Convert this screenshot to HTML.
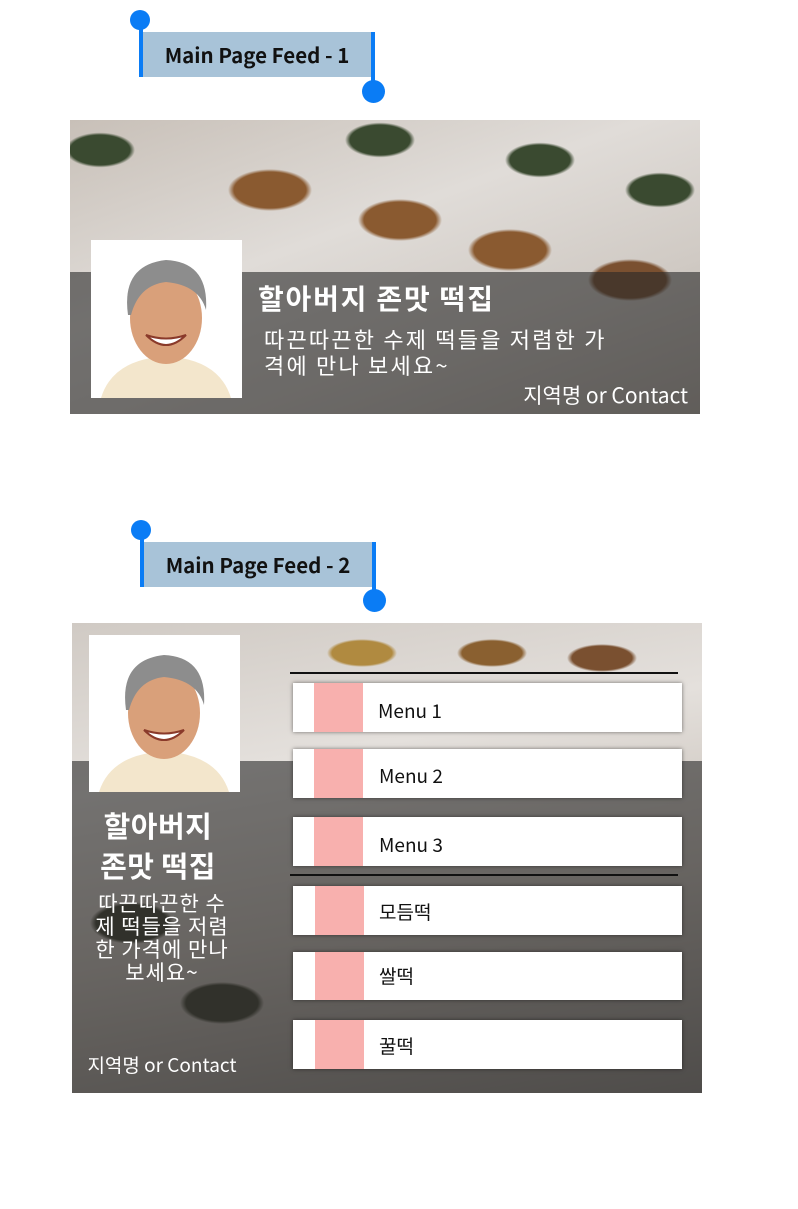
<!DOCTYPE html>
<html><head><meta charset="utf-8"><style>
body{margin:0;width:798px;height:1209px;background:#fff;position:relative;overflow:hidden;font-family:"Noto Sans CJK KR","Liberation Sans",sans-serif}
.a{position:absolute;white-space:nowrap}
.lbl{background:#a8c3d8;font-weight:bold;font-size:20.5px;color:#111;text-align:center;line-height:45px}
.bl{background:#0a7cf5}
.dot{background:#0a7cf5;border-radius:50%}
.img1{background:
radial-gradient(ellipse 60px 30px at 200px 70px,#8a5a30 60%,transparent 70%),
radial-gradient(ellipse 60px 30px at 330px 100px,#8a5a30 60%,transparent 70%),
radial-gradient(ellipse 60px 30px at 440px 130px,#8a5a30 60%,transparent 70%),
radial-gradient(ellipse 60px 30px at 560px 160px,#7a5030 60%,transparent 70%),
radial-gradient(ellipse 50px 25px at 310px 20px,#3a4a30 60%,transparent 70%),
radial-gradient(ellipse 50px 25px at 470px 40px,#3a4a30 60%,transparent 70%),
radial-gradient(ellipse 50px 25px at 590px 70px,#3a4a30 60%,transparent 70%),
radial-gradient(ellipse 50px 25px at 30px 30px,#3a4a30 60%,transparent 70%),
linear-gradient(160deg,#c8c0b8,#e0dcd8 40%,#d0cac4 70%,#b5ada5)}
.img2{background:
radial-gradient(ellipse 50px 20px at 290px 30px,#b08a40 60%,transparent 70%),
radial-gradient(ellipse 50px 20px at 420px 30px,#8a6030 60%,transparent 70%),
radial-gradient(ellipse 50px 20px at 530px 35px,#7a5030 60%,transparent 70%),
radial-gradient(ellipse 60px 30px at 60px 300px,#404030 60%,transparent 70%),
radial-gradient(ellipse 60px 30px at 150px 380px,#404030 60%,transparent 70%),
linear-gradient(170deg,#d0cac4,#e4e0dc 30%,#c8c0b8 60%,#8a847e)}
.ov{background:rgba(40,40,40,.6)}
.face{background:#fff;overflow:hidden}
.w{color:#fff}
.mb{background:#fff;box-shadow:0 0 4px rgba(0,0,0,.5)}
.pk{background:#f8b0ae}
.mt{font-size:19px;color:#111;line-height:49px}
</style></head><body>

<div class="a lbl" style="left:143px;top:32px;width:228px;height:45px">Main Page Feed - 1</div>
<div class="a bl" style="left:139px;top:20px;width:4px;height:57px"></div>
<div class="a dot" style="left:130px;top:10px;width:20px;height:20px"></div>
<div class="a bl" style="left:371px;top:32px;width:4px;height:59px"></div>
<div class="a dot" style="left:362px;top:80px;width:23px;height:23px"></div>

<div class="a img1" style="left:70px;top:120px;width:630px;height:294px"></div>
<div class="a ov" style="left:70px;top:272px;width:630px;height:142px"></div>
<div class="a face" style="left:91px;top:240px;width:151px;height:158px">
<svg width="151" height="158"><path d="M10 158 Q20 125 60 118 L90 118 Q130 125 140 158Z" fill="#f3e6cc"/><ellipse cx="75" cy="78" rx="36" ry="46" fill="#d9a07a"/><path d="M37 75 Q30 25 75 20 Q118 22 115 70 Q108 45 75 42 Q48 45 40 75Z" fill="#8d8d8d"/><path d="M55 95 Q75 115 95 95 Q75 102 55 95Z" fill="#fff" stroke="#8a3a2a" stroke-width="2"/></svg></div>
<div class="a w" style="left:258px;top:279px;font-size:28px;font-weight:bold;line-height:38px;letter-spacing:1.8px">할아버지 존맛 떡집</div>
<div class="a w" style="left:264px;top:326px;font-size:22px;line-height:26px;letter-spacing:2.2px">따끈따끈한 수제 떡들을 저렴한 가<br>격에 만나 보세요~</div>
<div class="a w" style="left:488px;top:380px;font-size:21px;width:200px;text-align:right">지역명 or Contact</div>

<div class="a lbl" style="left:144px;top:542px;width:228px;height:45px">Main Page Feed - 2</div>
<div class="a bl" style="left:140px;top:530px;width:4px;height:57px"></div>
<div class="a dot" style="left:131px;top:520px;width:20px;height:20px"></div>
<div class="a bl" style="left:372px;top:542px;width:4px;height:59px"></div>
<div class="a dot" style="left:363px;top:589px;width:23px;height:23px"></div>

<div class="a img2" style="left:72px;top:623px;width:630px;height:470px"></div>
<div class="a ov" style="left:72px;top:761px;width:630px;height:332px"></div>
<div class="a face" style="left:89px;top:635px;width:151px;height:157px">
<svg width="151" height="157"><path d="M10 157 Q20 125 60 118 L90 118 Q130 125 140 157Z" fill="#f3e6cc"/><ellipse cx="75" cy="78" rx="36" ry="46" fill="#d9a07a"/><path d="M37 75 Q30 25 75 20 Q118 22 115 70 Q108 45 75 42 Q48 45 40 75Z" fill="#8d8d8d"/><path d="M55 95 Q75 115 95 95 Q75 102 55 95Z" fill="#fff" stroke="#8a3a2a" stroke-width="2"/></svg></div>
<div class="a w" style="left:58px;top:805px;width:200px;text-align:center;font-size:29px;font-weight:bold;line-height:40px;letter-spacing:0.5px">할아버지<br>존맛 떡집</div>
<div class="a w" style="left:62px;top:892px;width:200px;text-align:center;font-size:21px;line-height:23px;letter-spacing:1px">따끈따끈한 수<br>제 떡들을 저렴<br>한 가격에 만나<br>보세요~</div>
<div class="a w" style="left:62px;top:1051px;width:200px;text-align:center;font-size:19px">지역명 or Contact</div>

<div class="a" style="left:290px;top:672px;width:388px;height:2px;background:#111"></div>
<div class="a" style="left:290px;top:874px;width:388px;height:2px;background:#111"></div>

<div class="a mb" style="left:293px;top:683px;width:389px;height:49px"></div><div class="a pk" style="left:314px;top:683px;width:49px;height:49px"></div><div class="a mt" style="left:378px;top:686px">Menu 1</div>
<div class="a mb" style="left:293px;top:749px;width:389px;height:49px"></div><div class="a pk" style="left:314px;top:749px;width:49px;height:49px"></div><div class="a mt" style="left:379px;top:751px">Menu 2</div>
<div class="a mb" style="left:293px;top:817px;width:389px;height:49px"></div><div class="a pk" style="left:314px;top:817px;width:49px;height:49px"></div><div class="a mt" style="left:379px;top:820px">Menu 3</div>
<div class="a mb" style="left:293px;top:886px;width:389px;height:49px"></div><div class="a pk" style="left:315px;top:886px;width:49px;height:49px"></div><div class="a mt" style="left:379px;top:887px">모듬떡</div>
<div class="a mb" style="left:293px;top:952px;width:389px;height:48px"></div><div class="a pk" style="left:315px;top:952px;width:49px;height:48px"></div><div class="a mt" style="left:379px;top:951px">쌀떡</div>
<div class="a mb" style="left:293px;top:1020px;width:389px;height:49px"></div><div class="a pk" style="left:315px;top:1020px;width:49px;height:49px"></div><div class="a mt" style="left:379px;top:1021px">꿀떡</div>
</body></html>
